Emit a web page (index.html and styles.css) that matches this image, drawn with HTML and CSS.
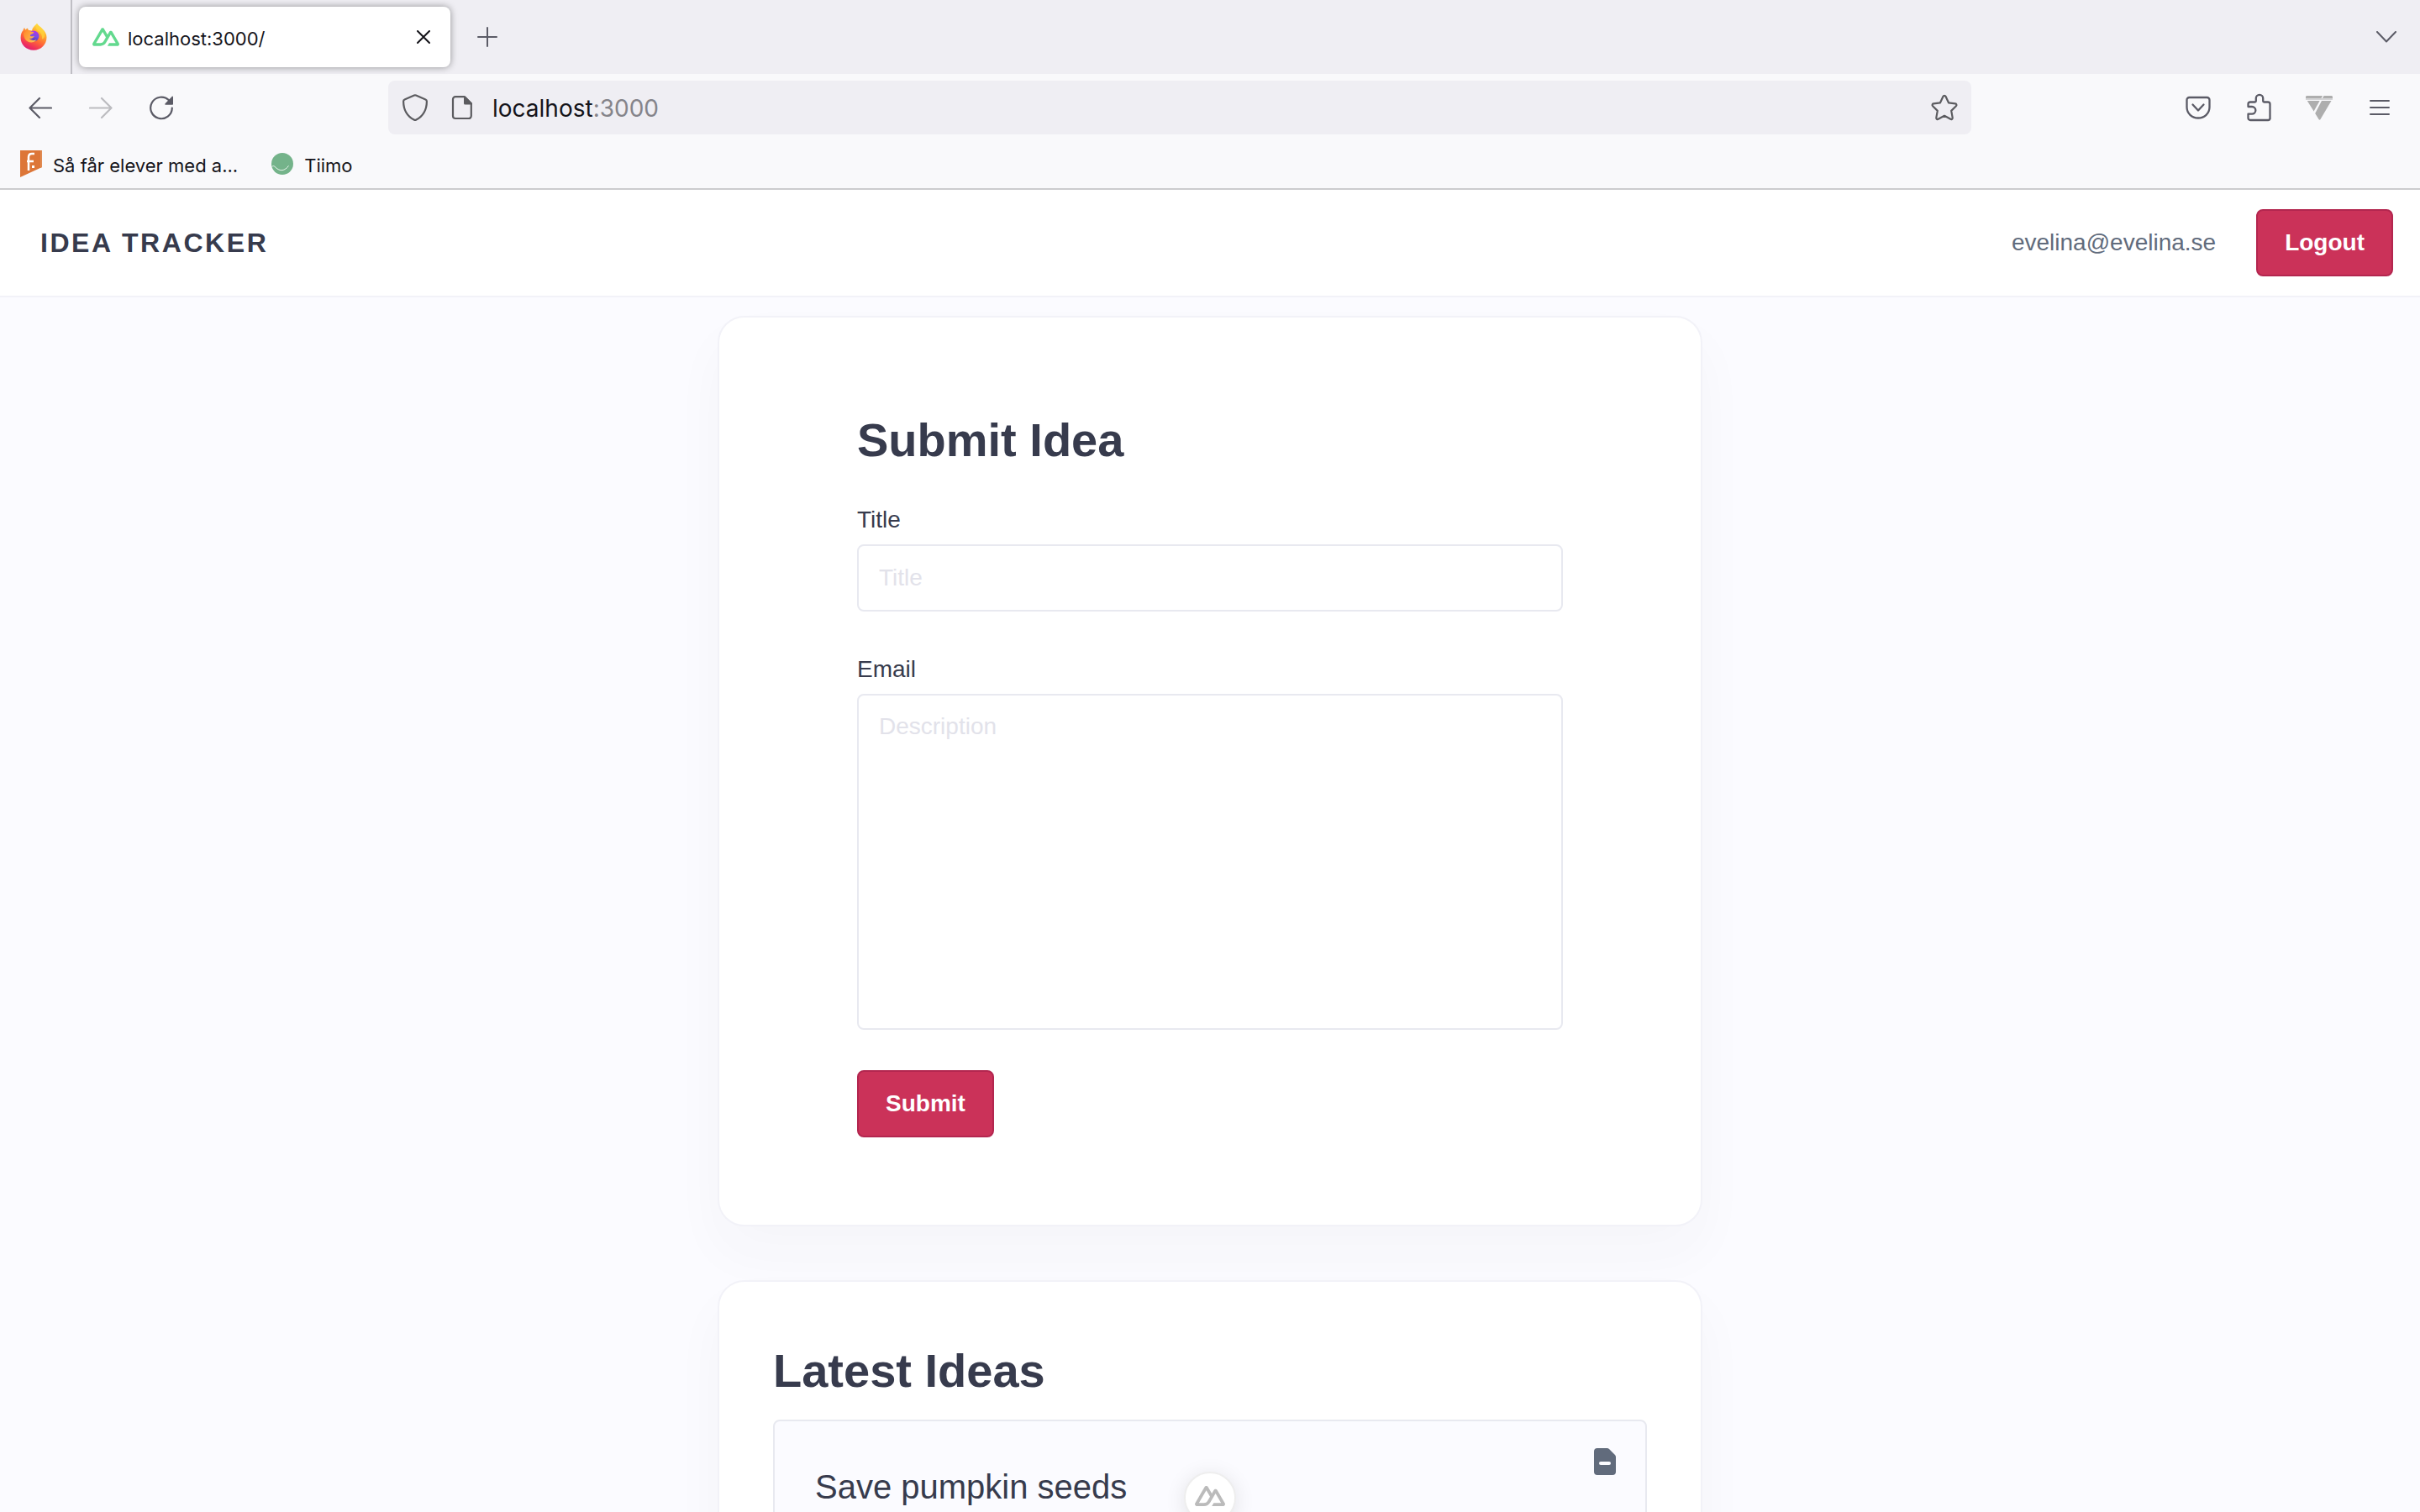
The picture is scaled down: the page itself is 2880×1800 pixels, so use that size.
FILE: index.html
```html
<!DOCTYPE html>
<html lang="en">
<head>
<meta charset="utf-8">
<meta name="viewport" content="width=device-width, initial-scale=1">
<title>Idea Tracker</title>
<link rel="stylesheet" href="styles.css">
</head>
<body class="window">
  <svg class="defs" aria-hidden="true">
    <symbol id="nuxt" viewBox="0 150 900 600">
      <path fill="currentColor" d="M504.908 750H839.476C850.103 750.001 860.542 747.229 869.745 741.963C878.948 736.696 886.589 729.121 891.9 719.999C897.211 710.876 900.005 700.529 900 689.997C899.995 679.465 897.193 669.12 891.873 660.002L667.187 274.289C661.876 265.169 654.237 257.595 645.036 252.329C635.835 247.064 625.398 244.291 614.773 244.291C604.149 244.291 593.711 247.064 584.511 252.329C575.31 257.595 567.67 265.169 562.36 274.289L504.908 372.979L392.581 179.993C387.266 170.874 379.623 163.301 370.42 158.036C361.216 152.772 350.777 150 340.151 150C329.525 150 319.086 152.772 309.883 158.036C300.679 163.301 293.036 170.874 287.721 179.993L8.126 660.002C2.807 669.12 0.005 679.465 0 689.997C-0.005 700.529 2.789 710.876 8.1 719.999C13.411 729.121 21.052 736.696 30.255 741.963C39.458 747.229 49.897 750.001 60.524 750H270.538C353.748 750 415.112 713.775 457.336 643.101L559.849 467.145L614.757 372.979L779.547 655.834H559.849L504.908 750ZM267.114 655.737L120.551 655.704L340.249 278.586L449.87 467.145L376.474 593.175C348.433 639.03 316.577 655.737 267.114 655.737Z"/>
    </symbol>
  </svg>

  <div class="tabs">
    <button class="tabs__home" aria-label="Firefox View">
      <svg width="32" height="32" viewBox="0 0 32 32">
        <defs>
          <linearGradient id="flame" x1="0.8" y1="0" x2="0.3" y2="1">
            <stop offset="0" stop-color="#fff44f"/><stop offset="0.3" stop-color="#ffb02e"/><stop offset="0.6" stop-color="#ff6a35"/><stop offset="0.85" stop-color="#f0305a"/><stop offset="1" stop-color="#d81e7a"/>
          </linearGradient>
          <linearGradient id="globe" x1="0.6" y1="0" x2="0.4" y2="1">
            <stop offset="0" stop-color="#b833e1"/><stop offset="0.5" stop-color="#7a4ee8"/><stop offset="1" stop-color="#4a3aa8"/>
          </linearGradient>
          <linearGradient id="fox" x1="0" y1="0" x2="1" y2="0.6">
            <stop offset="0" stop-color="#ff8a2b"/><stop offset="1" stop-color="#ffbd4f"/>
          </linearGradient>
        </defs>
        <path fill="url(#flame)" d="M20 0c1 2 4 3.500 6.500 6.500C29.500 9 31.500 12.500 31.500 16.500 31.500 25 24.800 31.800 16 31.800S.600 25 .600 17c0-4 1-7 3-9 .200-1.200.800-2.300 1.700-3 .100 1 .500 2 1 2.600.8-1 1.700-1.700 2.700-2 .1 1 .5 1.800 1 2.400 1.500.1 3 .1 4 .5C14.500 5 17 2.500 20 0z"/>
        <circle cx="16" cy="15" r="6.500" fill="url(#globe)"/>
        <path fill="url(#fox)" d="M4 12c2-3 5-4 8-2.600 1.500.200 3 .300 4.300.700-.300 1.800-2 2.300-3.800 3.200-.800.600-.500 1.700-.500 1.700 1.500.300 3 .700 5-.200-1 2.500-3.500 3.500-6 3 1.500 2 5 3 8.500 1.500C16 24.500 8 23 5.500 18c-1-2-1.500-4-1.500-6z"/>
        <path fill="#ffd43c" opacity=".75" d="M20 0c1 2 4 3.500 6.500 6.500 2 2.500 3 6 2.500 9-.500 2-2 3-3 3 .500-4-1-7-4-9-3-2-4-5-2-9.500z"/>
      </svg>
    </button>
    <div class="tab">
      <svg class="tab__logo" width="32" height="22"><use href="#nuxt"/></svg>
      <span class="tab__title">localhost:3000/</span>
      <button class="tab__close" aria-label="Close tab">
        <svg width="16" height="16" viewBox="0 0 16 16" fill="none" stroke="#15141a" stroke-width="2" stroke-linecap="round"><path d="M1 1l14 14M15 1L1 15"/></svg>
      </button>
    </div>
    <button class="tabs__new" aria-label="New tab">
      <svg width="24" height="24" viewBox="0 0 24 24" fill="none" stroke="#5b5b66" stroke-width="2" stroke-linecap="round"><path d="M12 1v22M1 12h22"/></svg>
    </button>
    <button class="tabs__list" aria-label="List all tabs">
      <svg width="24" height="14" viewBox="0 0 24 14" fill="none" stroke="#5b5b66" stroke-width="2" stroke-linecap="round" stroke-linejoin="round"><path d="M1 1l11 11.500L23 1"/></svg>
    </button>
  </div>

  <div class="toolbar">
    <div class="toolbar__nav">
      <button class="tool" aria-label="Back">
        <svg width="28" height="26" viewBox="0 0 28 26" fill="none" stroke="#5b5b66" stroke-width="2.200" stroke-linecap="round" stroke-linejoin="round"><path d="M13 2L1.500 13.500 13 25M2 13.500h25"/></svg>
      </button>
      <button class="tool" aria-label="Forward" disabled>
        <svg width="28" height="26" viewBox="0 0 28 26" fill="none" stroke="#bcbcc0" stroke-width="2.200" stroke-linecap="round" stroke-linejoin="round"><path d="M15 2l11.500 11.500L15 25M26 13.500H1"/></svg>
      </button>
      <button class="tool" aria-label="Reload">
        <svg width="28" height="30" viewBox="0 0 28 30"><path d="M26.800 15.500A12.800 12.800 0 1 1 23 6.300" fill="none" stroke="#5b5b66" stroke-width="2.200" stroke-linecap="round"/><path d="M28 2.500v8.500a.800.800 0 0 1-.8.800h-8c-.9 0-1.200-1-.6-1.600l8-8.300c.6-.6 1.400-.2 1.400.6z" fill="#5b5b66"/></svg>
      </button>
    </div>
    <div class="address">
      <svg width="32" height="34" viewBox="0 0 32 34" fill="none" stroke="#5b5b5f" stroke-width="2.200" stroke-linejoin="round"><path d="M14.900 2.600L3.500 7.500c-1 .400-1.400 1.200-1.400 2.200.1 9.300 4 17.300 12.500 21.800.9.500 1.900.500 2.800 0C25.900 27 29.800 19 29.900 9.700c0-1-.4-1.800-1.400-2.200L17.100 2.600a2.800 2.800 0 0 0-2.200 0z"/></svg>
      <svg width="26" height="30" viewBox="0 0 26 30"><path d="M5 2.200h11l7.800 8V25a3 3 0 0 1-3 3H5a3 3 0 0 1-3-3V5.200a3 3 0 0 1 3-3z" fill="none" stroke="#5b5b5f" stroke-width="2.200" stroke-linejoin="round"/><path d="M15 2h2l8 8v1.500h-8.500a1.500 1.500 0 0 1-1.500-1.500z" fill="#5b5b5f"/></svg>
      <div class="address__text" role="textbox" aria-label="Address" contenteditable="true" spellcheck="false">localhost<span class="address__port">:3000</span></div>
      <button class="address__star" aria-label="Bookmark this page">
        <svg width="32" height="32" viewBox="0 0 32 32" fill="none" stroke="#5b5b5f" stroke-width="2.200" stroke-linejoin="round"><path d="M14.500 2.800c.600-1.300 2.400-1.300 3 0l3.500 7.500 8 1.100c1.400.200 1.900 1.900.9 2.800l-5.700 5.700 1.500 8.200c.2 1.400-1.200 2.400-2.400 1.700L16 25.800l-7.300 4c-1.200.7-2.600-.3-2.400-1.700l1.500-8.200-5.700-5.700c-1-.9-.5-2.600.9-2.800l8-1.100z"/></svg>
      </button>
    </div>
    <div class="toolbar__tools">
      <button class="tool" aria-label="Save to Pocket">
        <svg width="30" height="28" viewBox="0 0 30 28" fill="none" stroke="#5b5b66" stroke-width="2.300" stroke-linecap="round" stroke-linejoin="round"><path d="M4.500 2h21a3 3 0 0 1 3 3v8.500c0 7.500-6 13-13.500 13S1.500 21 1.500 13.500V5a3 3 0 0 1 3-3zM8.500 10.500L15 17.500l6.500-7"/></svg>
      </button>
      <button class="tool" aria-label="Extensions">
        <svg width="30" height="34" viewBox="-1 0 30 34" fill="none" stroke="#5b5b66" stroke-width="2.300" stroke-linejoin="round"><path d="M4 10.500h5.500c.8 0 1.300-.5 1.300-1.300V6a4.200 4.200 0 0 1 8.400 0v3.200c0 .8.500 1.300 1.300 1.300H25a2.500 2.500 0 0 1 2.500 2.500v17.500A2.500 2.500 0 0 1 25 32H4a2.500 2.500 0 0 1-2.500-2.500v-4.800H6a4.200 4.200 0 0 0 0-8.700H1.500v-3A2.500 2.500 0 0 1 4 10.500z"/></svg>
      </button>
      <button class="tool" aria-label="Vue.js devtools">
        <svg width="34" height="30" viewBox="0 0 34 30" fill="#aeaeae"><path d="M1 2.500C1 1.500 1.700 1 2.500 1H21l-1.500 3H1z"/><path d="M22.500 1h9c.8 0 1.500.500 1.500 1.500V4H21z"/><path fill="#d4d4d6" d="M1 4h32v2H1z"/><path d="M2.800 7h14.800l-7 12.500z"/><path d="M20 7h11.500L18.500 29c-.5.900-1.500.9-2 0l-4.300-7z"/></svg>
      </button>
      <button class="tool" aria-label="Open application menu">
        <svg width="24" height="20" viewBox="0 0 24 20" fill="none" stroke="#5b5b66" stroke-width="2" stroke-linecap="round"><path d="M1 2h22M1 10h22M1 18h22"/></svg>
      </button>
    </div>
  </div>

  <nav class="bookmarks" aria-label="Bookmarks">
    <a class="bookmark" href="#">
      <svg width="26" height="32" viewBox="0 0 26 32"><path fill="#dd7638" d="M0 0h26v20L0 32z"/><path fill="#e08a52" d="M24 0h2v20l-2 1z"/><path fill="none" stroke="#fff" stroke-width="2.500" d="M17 4h-3c-2.500 0-4 1.500-4 4v16M8 13h8"/><path fill="#fff" d="M14 18h3v3h-3z"/></svg>
      <span class="bookmark__name">Så får elever med a...</span>
    </a>
    <a class="bookmark" href="#">
      <svg width="26" height="26" viewBox="0 0 26 26"><circle cx="13" cy="13" r="13" fill="#74b38a"/><path d="M.500 16.500c1.500-1.500 3-1 4.500.800 5 5 11 4.500 15.500-2" fill="none" stroke="#e8f5ec" stroke-width="1"/></svg>
      <span class="bookmark__name">Tiimo</span>
    </a>
  </nav>

  <div class="page">
    <header class="header">
      <a class="header__brand" href="#">Idea Tracker</a>
      <div class="header__user">
        <span>evelina@evelina.se</span>
        <button class="button">Logout</button>
      </div>
    </header>

    <main class="content">
      <section class="card card--form">
        <form class="form">
          <h2 class="heading">Submit Idea</h2>
          <div class="field">
            <label for="title">Title</label>
            <input class="control" id="title" type="text" placeholder="Title">
          </div>
          <div class="field">
            <label for="description">Email</label>
            <textarea class="control control--area" id="description" placeholder="Description"></textarea>
          </div>
          <button class="button" type="submit">Submit</button>
        </form>
      </section>

      <section class="card card--list">
        <h2 class="heading">Latest Ideas</h2>
        <ul class="ideas">
          <li class="idea">
            <h3 class="idea__title">Save pumpkin seeds</h3>
            <button class="idea__remove" aria-label="Remove idea">
              <svg width="26" height="32" viewBox="0 0 26 32"><path fill="#616b7c" d="M4 0h11.500c1 0 1.800.400 2.500 1l7 7c.700.700 1 1.500 1 2.500V28a4 4 0 0 1-4 4H4a4 4 0 0 1-4-4V4a4 4 0 0 1 4-4z"/><rect x="6" y="16" width="14" height="4" rx="2" fill="#fbfbff"/></svg>
            </button>
          </li>
        </ul>
      </section>
    </main>

    <button class="devtools" aria-label="Toggle Nuxt DevTools">
      <svg width="36" height="24"><use href="#nuxt"/></svg>
    </button>
  </div>
</body>
</html>
```
FILE: styles.css
```css
* {
  box-sizing: border-box;
}

button {
  display: flex;
  align-items: center;
  justify-content: center;
  padding: 0;
  border: 0;
  background: none;
  font: inherit;
  color: inherit;
}

a {
  color: inherit;
  text-decoration: none;
}

svg {
  display: block;
  flex: none;
}

.defs {
  position: absolute;
  width: 0;
  height: 0;
}

/* Browser window */

.window {
  display: flex;
  flex-direction: column;
  height: 100vh;
  margin: 0;
  overflow: hidden;
  background: #f9f9fb;
  color: #15141a;
  font-family: Inter, "Liberation Sans", sans-serif;
  font-size: 22px;
}

.tabs {
  display: flex;
  flex: none;
  align-items: center;
  height: 88px;
  background: #efeef3;
}

.tabs__home {
  width: 86px;
  height: 88px;
  padding-right: 4px;
  border-right: 2px solid #bfbec4;
}

.tab {
  display: flex;
  align-items: center;
  gap: 10px;
  width: 442px;
  height: 72px;
  margin-left: 8px;
  padding: 0 16px;
  border-radius: 8px;
  background: #fff;
  box-shadow: 0 0 8px rgba(0, 0, 0, 0.4);
}

.tab__logo {
  color: #63d98e;
}

.tab__title {
  flex: 1;
  padding-top: 4px;
}

.tab__close {
  width: 32px;
  height: 32px;
}

.tabs__new {
  width: 64px;
  height: 64px;
  margin-left: 12px;
}

.tabs__list {
  width: 64px;
  height: 64px;
  margin-left: auto;
  margin-right: 8px;
}

.toolbar {
  display: grid;
  flex: none;
  grid-template-columns: 446px minmax(0, 1884fr) 534fr;
  align-items: center;
  height: 80px;
  padding-left: 16px;
}

.toolbar__nav,
.toolbar__tools {
  display: flex;
  gap: 8px;
}

.toolbar__tools {
  justify-content: flex-end;
  padding-right: 16px;
}

.tool {
  width: 64px;
  height: 64px;
}

.address {
  display: flex;
  align-items: center;
  height: 64px;
  padding: 0 16px;
  border-radius: 8px;
  background: #efeef3;
  font-size: 28px;
}

.address__text {
  flex: 1;
  margin-left: 23px;
  padding-top: 2px;
  outline: 0;
}

.address svg + svg {
  margin-left: 27px;
}

.address__port {
  color: #85848a;
}

.bookmarks {
  display: flex;
  flex: none;
  gap: 40px;
  height: 58px;
  padding: 0 24px 2px;
  border-bottom: 2px solid #ccccce;
}

.bookmark {
  display: flex;
  align-items: center;
  gap: 13px;
}

.bookmark__name {
  padding-top: 4px;
}

/* Idea tracker */

.page {
  position: relative;
  flex: 1;
  min-height: 0;
  overflow: hidden;
  background: #fbfbff;
  color: #373b4d;
  font: 28px/42px "Liberation Sans", Arial, sans-serif;
}

.header {
  display: flex;
  align-items: center;
  justify-content: space-between;
  height: 128px;
  padding: 0 32px 0 48px;
  border-bottom: 2px solid #f2f2f8;
  background: #fff;
}

.header__brand {
  font-size: 32px;
  font-weight: 700;
  letter-spacing: 0.08em;
  text-transform: uppercase;
}

.header__user {
  display: flex;
  align-items: center;
  gap: 48px;
  color: #616b7c;
}

.button {
  height: 80px;
  padding: 0 32px;
  border: 2px solid #b3264f;
  border-radius: 8px;
  background: #cb3259;
  color: #fff;
  font-weight: 700;
}

.content {
  display: flex;
  flex-direction: column;
  gap: 64px;
  max-width: 1172px;
  margin: 22px auto;
}

.card {
  border: 2px solid #f2f2f8;
  border-radius: 32px;
  background: #fff;
  box-shadow: 0 32px 64px rgba(55, 59, 77, 0.03);
}

.card--form {
  padding: 104px 164px;
}

.card--list {
  padding: 64px;
}

.heading {
  margin: 0;
  font-size: 56px;
  line-height: 84px;
}

.form {
  display: flex;
  flex-direction: column;
  align-items: flex-start;
  gap: 48px;
}

.form .heading {
  margin-bottom: -16px;
}

.field {
  display: flex;
  flex-direction: column;
  gap: 8px;
  width: 100%;
}

.control {
  display: block;
  width: 100%;
  height: 80px;
  padding: 16px 24px;
  border: 2px solid #e8e9f0;
  border-radius: 8px;
  background: #fff;
  color: inherit;
  font: inherit;
}

.control::placeholder {
  color: #e2e2ea;
  opacity: 1;
}

.control--area {
  height: 400px;
  resize: none;
}

.ideas {
  margin: 16px 0 0;
  padding: 0;
  list-style: none;
}

.idea {
  display: flex;
  align-items: flex-start;
  justify-content: space-between;
  padding: 16px 16px 48px 48px;
  border: 2px solid #e8e9f0;
  border-radius: 8px;
  background: #fbfbff;
}

.idea__title {
  margin: 32px 0 0;
  font-size: 40px;
  font-weight: 400;
  line-height: 60px;
}

.idea__remove {
  width: 64px;
  height: 64px;
}

/* Floats over the bottom edge of the page */
.devtools {
  position: absolute;
  bottom: -14px;
  left: 50%;
  width: 62px;
  height: 62px;
  margin-left: -31px;
  padding-bottom: 4px;
  border: 2px solid #eee;
  border-radius: 31px;
  background: #fff;
  color: #bbb;
  box-shadow: 0 4px 24px rgba(0, 0, 0, 0.1);
}
```
